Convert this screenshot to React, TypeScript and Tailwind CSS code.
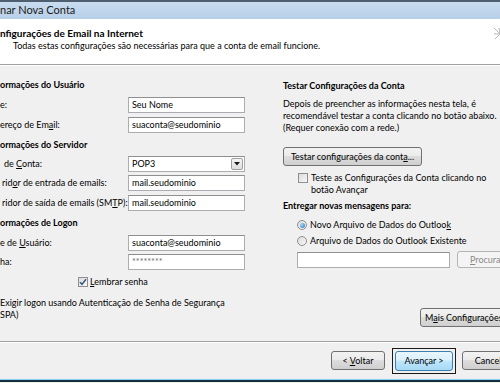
import React from "react";

const btnBase =
  "flex h-[19px] items-center justify-center rounded-[3px] border border-[#707070] bg-[linear-gradient(#f2f2f2,#ebebeb_45%,#dddddd_50%,#cfcfcf)] text-black";

function Field({ value, width = "w-[117px]", muted = false }: { value: string; width?: string; muted?: boolean }) {
  return (
    <div
      className={`flex h-[16px] items-center border border-[#abadb3] border-t-[#8e8f8f] bg-white px-[3px] ${width} ${muted ? "text-[#6d6d6d]" : "text-black"}`}
    >
      {value}
    </div>
  );
}

function Row({ h, label, children }: { h: string; label: React.ReactNode; children?: React.ReactNode }) {
  return (
    <div className={`flex items-center ${h}`}>
      <div className="w-[128px] shrink-0 whitespace-nowrap">{label}</div>
      {children}
    </div>
  );
}

function Heading({ h, children }: { h: string; children: React.ReactNode }) {
  return <div className={`flex items-center font-bold ${h}`}>{children}</div>;
}

function CheckBox({ checked = false }: { checked?: boolean }) {
  return (
    <div className="flex h-[10px] w-[10px] shrink-0 items-center justify-center border border-[#8f8f8f] bg-[linear-gradient(135deg,#dcdcdc,#f7f7f7)]">
      {checked && (
        <svg width="8" height="8" viewBox="0 0 8 8">
          <path d="M1 4.2 L3 6.3 L7 1.2" fill="none" stroke="#3b5a82" strokeWidth="1.5" />
        </svg>
      )}
    </div>
  );
}

function Radio({ checked = false }: { checked?: boolean }) {
  return (
    <div className="flex h-[10px] w-[10px] shrink-0 items-center justify-center rounded-full border border-[#8f8f8f] bg-[linear-gradient(135deg,#dcdcdc,#f7f7f7)]">
      {checked && <div className="h-[5px] w-[5px] rounded-full bg-[radial-gradient(circle_at_35%_35%,#a8d8f8,#1e6fb8)]" />}
    </div>
  );
}

export default function App() {
  return (
    <div className="flex h-[383px] w-[500px] flex-col overflow-hidden bg-[#f0f0f0] font-['Lato',sans-serif] text-[9px] text-black">
      {/* title bar */}
      <div className="flex h-[19px] shrink-0 items-center border-t-[2px] border-[#4d5f70] bg-[linear-gradient(#c9dcef,#b7cfe8)] text-[11px] text-[#1a1a1a]">
        nar Nova Conta
      </div>

      {/* header */}
      <div className="relative flex h-[46px] shrink-0 flex-col border-b border-[#a0a0a0] bg-white pt-[8px]">
        <div className="h-[12px] text-[10px] leading-[12px] font-bold">nfigurações de Email na Internet</div>
        <div className="mt-[1px] h-[12px] pl-[13px] leading-[12px]">
          Todas estas configurações são necessárias para que a conta de email funcione.
        </div>
        <svg className="absolute right-0 top-[8px]" width="10" height="14" viewBox="0 0 10 14">
          <path d="M4 1 L10 7 M4 7 L10 7 M5 12 L10 7 M9 1 L10 7" stroke="#b8b8b8" strokeWidth="1" fill="none" />
        </svg>
      </div>

      {/* body */}
      <div className="flex h-[276px] shrink-0 border-t border-white">
        {/* left column */}
        <div className="flex w-[283px] shrink-0 flex-col pt-[9px]">
          <Heading h="h-[20px]">ormações do Usuário</Heading>
          <Row h="h-[20px]" label="e:">
            <Field value="Seu Nome" />
          </Row>
          <Row
            h="h-[20px]"
            label={
              <>
                ereço de Em<u>a</u>il:
              </>
            }
          >
            <Field value="suaconta@seudominio" />
          </Row>
          <Heading h="h-[19px]">ormações do Servidor</Heading>
          <Row
            h="h-[19px]"
            label={
              <span className="pl-[4px]">
                de <u>C</u>onta:
              </span>
            }
          >
            <div className="flex h-[16px] w-[117px] items-center border border-[#abadb3] border-t-[#8e8f8f] bg-white pl-[3px]">
              <span className="flex-1">POP3</span>
              <div className="mr-[1px] flex h-[12px] w-[12px] items-center justify-center rounded-[2px] border border-[#a0a0a0] bg-[linear-gradient(#f4f4f4,#dedede)]">
                <svg width="6" height="4" viewBox="0 0 6 4">
                  <path d="M0 0 H6 L3 3.5 Z" fill="#1a1a1a" />
                </svg>
              </div>
            </div>
          </Row>
          <Row
            h="h-[20px]"
            label={
              <span className="pl-[2px]">
                rid<u>o</u>r de entrada de emails:
              </span>
            }
          >
            <Field value="mail.seudominio" />
          </Row>
          <Row
            h="h-[20px]"
            label={
              <span className="pl-[2px]">
                ridor de saída de emails (SM<u>T</u>P):
              </span>
            }
          >
            <Field value="mail.seudominio" />
          </Row>
          <Heading h="h-[20px]">ormações de Logon</Heading>
          <Row
            h="h-[19px]"
            label={
              <>
                e de <u>U</u>suário:
              </>
            }
          >
            <Field value="suaconta@seudominio" />
          </Row>
          <Row h="h-[19px]" label="ha:">
            <Field value="********" muted />
          </Row>
          <div className="flex h-[21px] items-center gap-[2px] pl-[78px]">
            <CheckBox checked />
            <span>
              <u>L</u>embrar senha
            </span>
          </div>
          <div className="mt-[5px] leading-[12px]">
            <div>Exigir logon usando Autenticação de Senha de Segurança</div>
            <div>SPA)</div>
          </div>
        </div>

        {/* right column */}
        <div className="flex flex-1 flex-col pt-[14px]">
          <div className="h-[12px] leading-[12px] font-bold">Testar Configurações da Conta</div>
          <div className="mt-[6px] whitespace-nowrap leading-[12px]">
            <div>Depois de preencher as informações nesta tela, é</div>
            <div>recomendável testar a conta clicando no botão abaixo.</div>
            <div>(Requer conexão com a rede.)</div>
          </div>
          <div className={`${btnBase} mt-[13px] h-[18px] w-[139px]`}>
            <span>
              Testar configurações da cont<u>a</u>...
            </span>
          </div>
          <div className="mt-[6px] flex gap-[3px] pl-[15px] leading-[12px]">
            <div className="pt-[1px]">
              <CheckBox />
            </div>
            <div>
              <div>Teste as Configurações da Conta clicando no</div>
              <div>botão Avançar</div>
            </div>
          </div>
          <div className="mt-[4px] h-[12px] leading-[12px] font-bold">Entregar novas mensagens para:</div>
          <div className="mt-[5px] flex h-[16px] items-center gap-[3px] pl-[14px]">
            <Radio checked />
            <span>
              Novo Arquivo de Dados do Outloo<u>k</u>
            </span>
          </div>
          <div className="flex h-[16px] items-center gap-[3px] pl-[14px]">
            <Radio />
            <span>Arquivo de Dados do Outlook Existente</span>
          </div>
          <div className="mt-[2px] flex items-center gap-[7px] pl-[14px]">
            <Field value="" width="w-[153px]" />
            <div className="flex h-[17px] w-[60px] shrink-0 items-center rounded-[3px] border border-[#b5b5b5] bg-[#f4f4f4] pl-[12px] text-[#8a8a8a]">
              <span>
                <u>P</u>rocura
              </span>
            </div>
          </div>
          <div className="mt-auto mb-[14px] pl-[137px]">
            <div className={`${btnBase} w-[90px] !justify-start whitespace-nowrap pl-[4px]`}>
              <span>
                M<u>a</u>is Configurações
              </span>
            </div>
          </div>
        </div>
      </div>

      {/* footer */}
      <div className="h-[1px] shrink-0 bg-[#a0a0a0]" />
      <div className="h-[1px] shrink-0 bg-white" />
      <div className="flex h-[35px] shrink-0 items-center pl-[331px]">
        <div className={`${btnBase} w-[54px] shrink-0`}>
          <span>
            &lt;&nbsp;<u>V</u>oltar
          </span>
        </div>
        <div className="ml-[7px] flex h-[26px] w-[64px] shrink-0 items-center justify-center border border-[#1a1a1a]">
          <div className="flex h-[20px] w-[58px] items-center justify-center rounded-[3px] border border-[#3c7fb1] bg-[linear-gradient(#eaf6fd,#d9f0fc_45%,#bee6fd_50%,#a7d9f5)]">
            Avançar &gt;
          </div>
        </div>
        <div className={`${btnBase} ml-[6px] w-[60px] shrink-0`}>Cancelar</div>
      </div>
      <div className="h-[1px] shrink-0 bg-[#e4eef4]" />
      <div className="h-[1px] shrink-0 bg-[#8fd0ec]" />
      <div className="h-[2px] shrink-0 bg-[#12303e]" />
    </div>
  );
}
